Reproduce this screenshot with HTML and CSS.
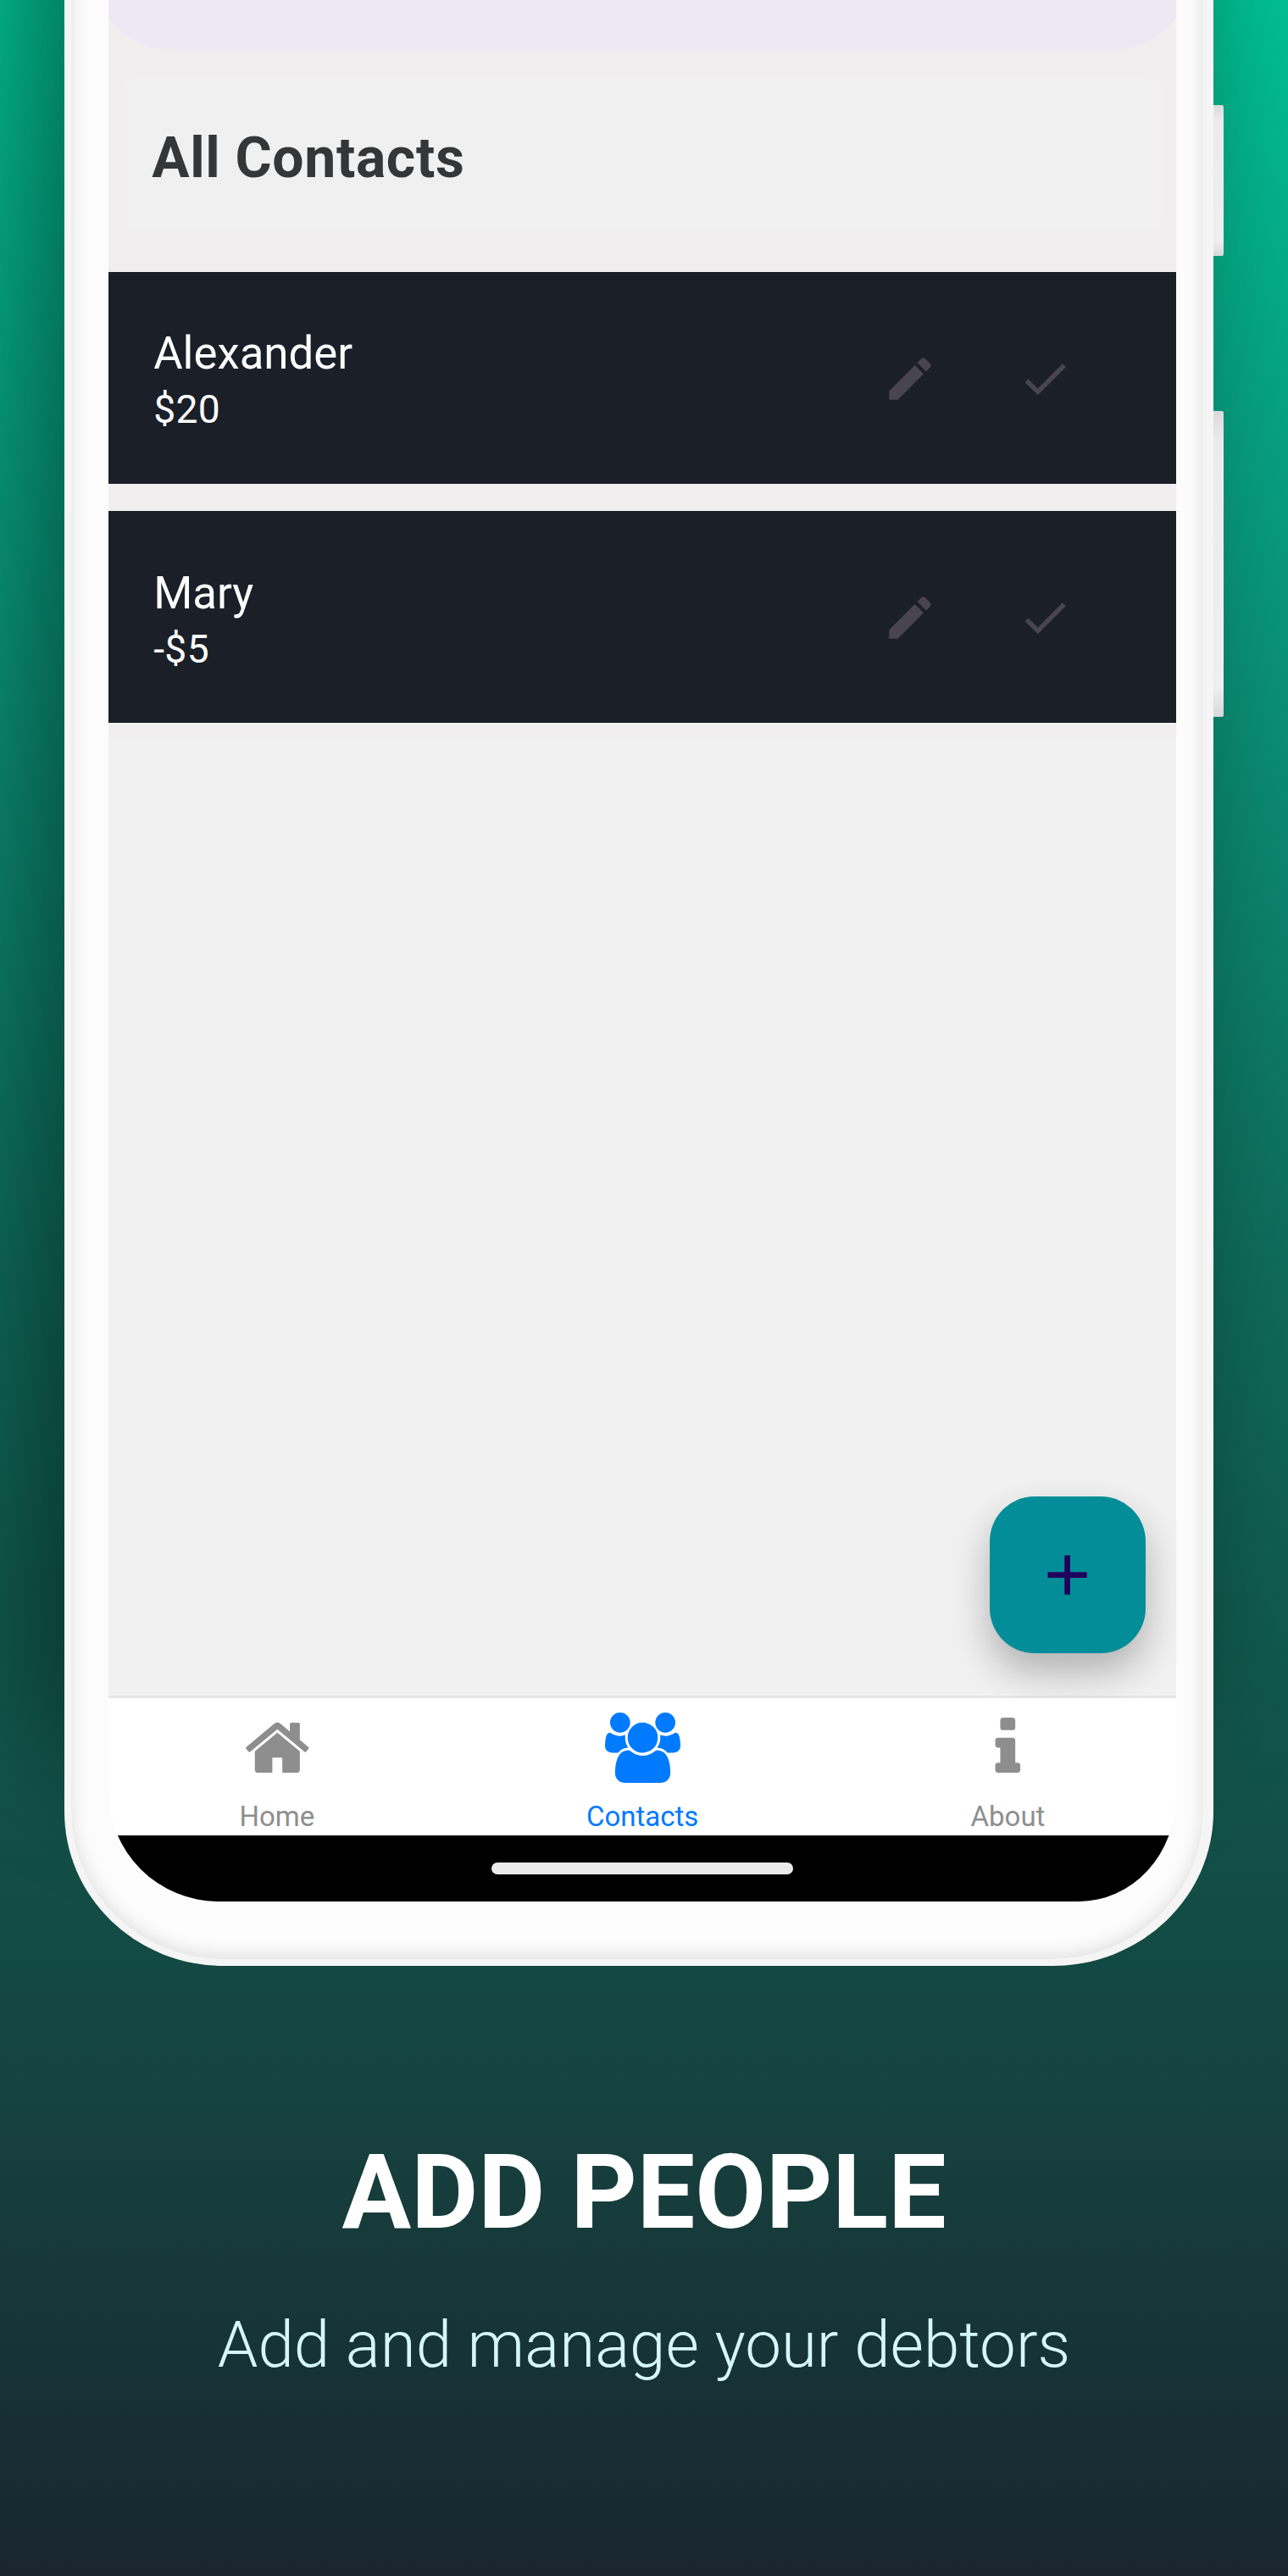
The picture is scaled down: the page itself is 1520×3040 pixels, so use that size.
FILE: index.html
```html
<!DOCTYPE html>
<html lang="en">
<head>
<meta charset="utf-8">
<title>Add People</title>
<link rel="stylesheet" href="styles.css">
</head>
<body>
<svg class="sprite" aria-hidden="true">
  <symbol id="pencil" viewBox="0 0 24 24"><path d="M20.71,7.04C21.1,6.65 21.1,6 20.71,5.63L18.37,3.29C18,2.9 17.35,2.9 16.96,3.29L15.12,5.12L18.87,8.87M3,17.25V21H6.75L17.81,9.93L14.06,6.18L3,17.25Z"/></symbol>
  <symbol id="check" viewBox="0 0 24 24"><path d="M21,7L9,19L3.5,13.5L4.91,12.09L9,16.17L19.59,5.59L21,7Z"/></symbol>
</svg>
<main class="poster">
  <div class="phone">
    <span class="side-button side-button--power"></span>
    <span class="side-button side-button--volume"></span>
    <div class="screen">
      <div class="app">
        <div class="content">
          <section class="contacts">
            <div class="summary"></div>
            <header class="title-card"><h2 class="title">All Contacts</h2></header>
            <div class="list">
              <article class="row">
                <div class="person"><span class="name">Alexander</span><span class="amount">$20</span></div>
                <div class="actions">
                  <svg class="action"><use href="#pencil"/></svg>
                  <svg class="action"><use href="#check"/></svg>
                </div>
              </article>
              <article class="row">
                <div class="person"><span class="name">Mary</span><span class="amount">-$5</span></div>
                <div class="actions">
                  <svg class="action"><use href="#pencil"/></svg>
                  <svg class="action"><use href="#check"/></svg>
                </div>
              </article>
            </div>
          </section>
          <button class="fab" aria-label="Add">
            <svg class="fab-icon" viewBox="0 0 24 24"><path d="M19,13H13V19H11V13H5V11H11V5H13V11H19V13Z"/></svg>
          </button>
        </div>
        <nav class="tabs">
          <a class="tab">
            <svg class="tab-icon" viewBox="0 0 1792 1792"><path d="M1472 992v480q0 26-19 45t-45 19h-384v-384h-256v384h-384q-26 0-45-19t-19-45v-480q0-1 .5-3t.5-3l575-474 575 474q1 2 1 6zm223-69l-62 74q-8 9-21 11h-3q-13 0-21-7l-692-577-692 577q-12 8-24 7-13-2-21-11l-62-74q-8-10-7-23.5t11-21.5l719-599q32-26 76-26t76 26l244 204v-195q0-14 9-23t23-9h192q14 0 23 9t9 23v408l219 182q10 8 11 21.5t-7 23.5z"/></svg>
            <span class="tab-label">Home</span>
          </a>
          <a class="tab tab--active">
            <svg class="tab-icon tab-icon--wide" viewBox="-64 0 1920 1792"><path d="M529 896q-162 5-265 128h-134q-82 0-138-40.5t-56-118.5q0-353 124-353 6 0 43.5 21t97.5 42.5 119 21.5q67 0 133-23-5 37-5 66 0 139 81 256zm1071 637q0 120-73 189.5t-194 69.5h-874q-121 0-194-69.5t-73-189.5q0-53 3.5-103.5t14-109 26.5-108.5 43-97.5 62-81 85.5-53.5 111.5-20q10 0 43 21.5t73 48 107 48 135 21.5 135-21.5 107-48 73-48 43-21.5q61 0 111.5 20t85.5 53.5 62 81 43 97.5 26.5 108.5 14 109 3.5 103.5zm-1024-1277q0 106-75 181t-181 75-181-75-75-181 75-181 181-75 181 75 75 181zm704 384q0 159-112.5 271.5t-271.5 112.5-271.5-112.5-112.5-271.5 112.5-271.5 271.5-112.5 271.5 112.5 112.5 271.5zm576 225q0 78-56 118.5t-138 40.5h-134q-103-123-265-128 81-117 81-256 0-29-5-66 66 23 133 23 59 0 119-21.5t97.5-42.5 43.5-21q124 0 124 353zm-128-609q0 106-75 181t-181 75-181-75-75-181 75-181 181-75 181 75 75 181z"/></svg>
            <span class="tab-label">Contacts</span>
          </a>
          <a class="tab">
            <svg class="tab-icon" viewBox="0 0 1792 1792"><path d="M1216 1344v128q0 26-19 45t-45 19h-512q-26 0-45-19t-19-45v-128q0-26 19-45t45-19h64v-384h-64q-26 0-45-19t-19-45v-128q0-26 19-45t45-19h384q26 0 45 19t19 45v576h64q26 0 45 19t19 45zm-128-1152v192q0 26-19 45t-45 19h-256q-26 0-45-19t-19-45v-192q0-26 19-45t45-19h256q26 0 45 19t19 45z"/></svg>
            <span class="tab-label">About</span>
          </a>
        </nav>
        <div class="gesture-bar"><span class="gesture-pill"></span></div>
      </div>
    </div>
  </div>
  <div class="caption">
    <h1 class="headline">ADD PEOPLE</h1>
    <p class="tagline">Add and manage your debtors</p>
  </div>
</main>
</body>
</html>
```
FILE: styles.css
```css
* { box-sizing: border-box; }

body {
  margin: 0;
  font-family: Roboto, "Liberation Sans", sans-serif;
}

.sprite {
  position: absolute;
  width: 0;
  height: 0;
}

.poster {
  width: 1520px;
  height: 3040px;
  overflow: hidden;
  background: linear-gradient(180deg, #02c193 0, #06a986 400px, #0b8f75 860px, #0f6c5b 1500px, #11594d 1960px, #134a44 2300px, #16423f 2480px, #173034 2840px, #19262d 3040px);
}

/* The device runs off the top edge of the poster. */
.phone {
  position: relative;
  width: 1356px;
  height: 2420px;
  margin: -100px 0 0 76px;
  padding: 100px 32px 68px 44.3px;
  border: solid #f5f5f5;
  border-width: 0 12px 8px 8px;
  border-radius: 0 0 190px 188px / 0 0 182px 182px;
  background: #fcfcfc;
  box-shadow:
    inset 0 -4px 20px rgba(0, 0, 0, .12),
    -38px -210px 150px rgba(0, 0, 0, .45);
}

.side-button {
  position: absolute;
  left: 100%;
  width: 12px;
  margin-left: 12px;
  border-radius: 0 2px 2px 0;
  background: linear-gradient(180deg, #dadada, #ebebeb 10%, #efefef 90%, #d8d8d8);
}

.side-button--power { top: 224px; height: 178px; }
.side-button--volume { top: 585px; height: 361px; }

.screen {
  display: flex;
  justify-content: center;
  height: 2244px;
  overflow: hidden;
  border-radius: 0 0 115px 130px / 0 0 125px 130px;
}

.app {
  display: flex;
  flex-direction: column;
  flex: none;
  width: 1294px;
  background: #f1f1f1;
}

.content {
  position: relative;
  height: 2004px;
  border-bottom: 3px solid #e6e6e6;
}

.contacts {
  height: 870px;
  padding-top: .1px;
  background: #f0eeef;
}

.summary {
  height: 159px;
  margin-top: -100px;
  border-radius: 0 0 92px 92px;
  background: #eee8f4;
}

.title-card {
  display: flex;
  align-items: center;
  height: 180px;
  margin: 33px 33px 48.5px;
  padding-left: 35px;
  border-radius: 18px;
  background: #f0f0f0;
}

.title {
  margin: 0 0 -9px;
  font-size: 66px;
  font-weight: 700;
  line-height: 78px;
  letter-spacing: .66px;
  color: #353637;
}

.list {
  display: flex;
  flex-direction: column;
  gap: 32.6px;
}

.row {
  display: flex;
  align-items: center;
  justify-content: space-between;
  height: 250px;
  padding: 9px 139.5px 0 70px;
  background: #1a1f28;
}

.person {
  display: flex;
  flex-direction: column;
  color: #fff;
}

.name { font-size: 52.8px; line-height: 66px; }
.amount { font-size: 46.2px; line-height: 66px; letter-spacing: .4px; }

.actions {
  display: flex;
  gap: 92.7px;
  margin-top: -7px;
}

.action {
  width: 66px;
  height: 66px;
  fill: #49454f;
}

.fab {
  position: absolute;
  right: 52.8px;
  bottom: 50.5px;
  display: flex;
  align-items: center;
  justify-content: center;
  width: 184.6px;
  height: 184.6px;
  padding: 0;
  border: 0;
  border-radius: 53px;
  background: #038d98;
  box-shadow: 0 22px 46px rgba(0, 0, 0, .27);
}

.fab-icon {
  width: 79.2px;
  height: 79.2px;
  fill: #21005d;
}

.tabs {
  position: relative;
  display: flex;
  height: 161.5px;
  background: #fff;
}

.tab {
  display: flex;
  flex: 1;
  flex-direction: column;
  align-items: center;
  padding-top: 17px;
  color: #8e8e8f;
}

.tab--active { color: #007aff; }

.tab-icon {
  width: 82.6px;
  height: 83px;
  fill: currentColor;
}

.tab-icon--wide { width: 89px; }

.tab-label {
  margin-top: 20px;
  font-size: 33px;
  line-height: 40px;
}

.gesture-bar {
  display: flex;
  justify-content: center;
  flex: 1;
  padding-top: 32px;
  background: #000;
}

.gesture-pill {
  width: 356px;
  height: 14px;
  border-radius: 7px;
  background: #ebebeb;
}

.caption {
  display: flex;
  flex-direction: column;
  align-items: center;
  padding-top: 197px;
  text-align: center;
}

.headline {
  margin: 0;
  font-size: 121.6px;
  font-weight: 700;
  line-height: 142px;
  color: #fff;
}

.tagline {
  margin: 63px 0 0;
  font-size: 76.3px;
  font-weight: 300;
  line-height: 90px;
  color: #d5f7fc;
}
```
